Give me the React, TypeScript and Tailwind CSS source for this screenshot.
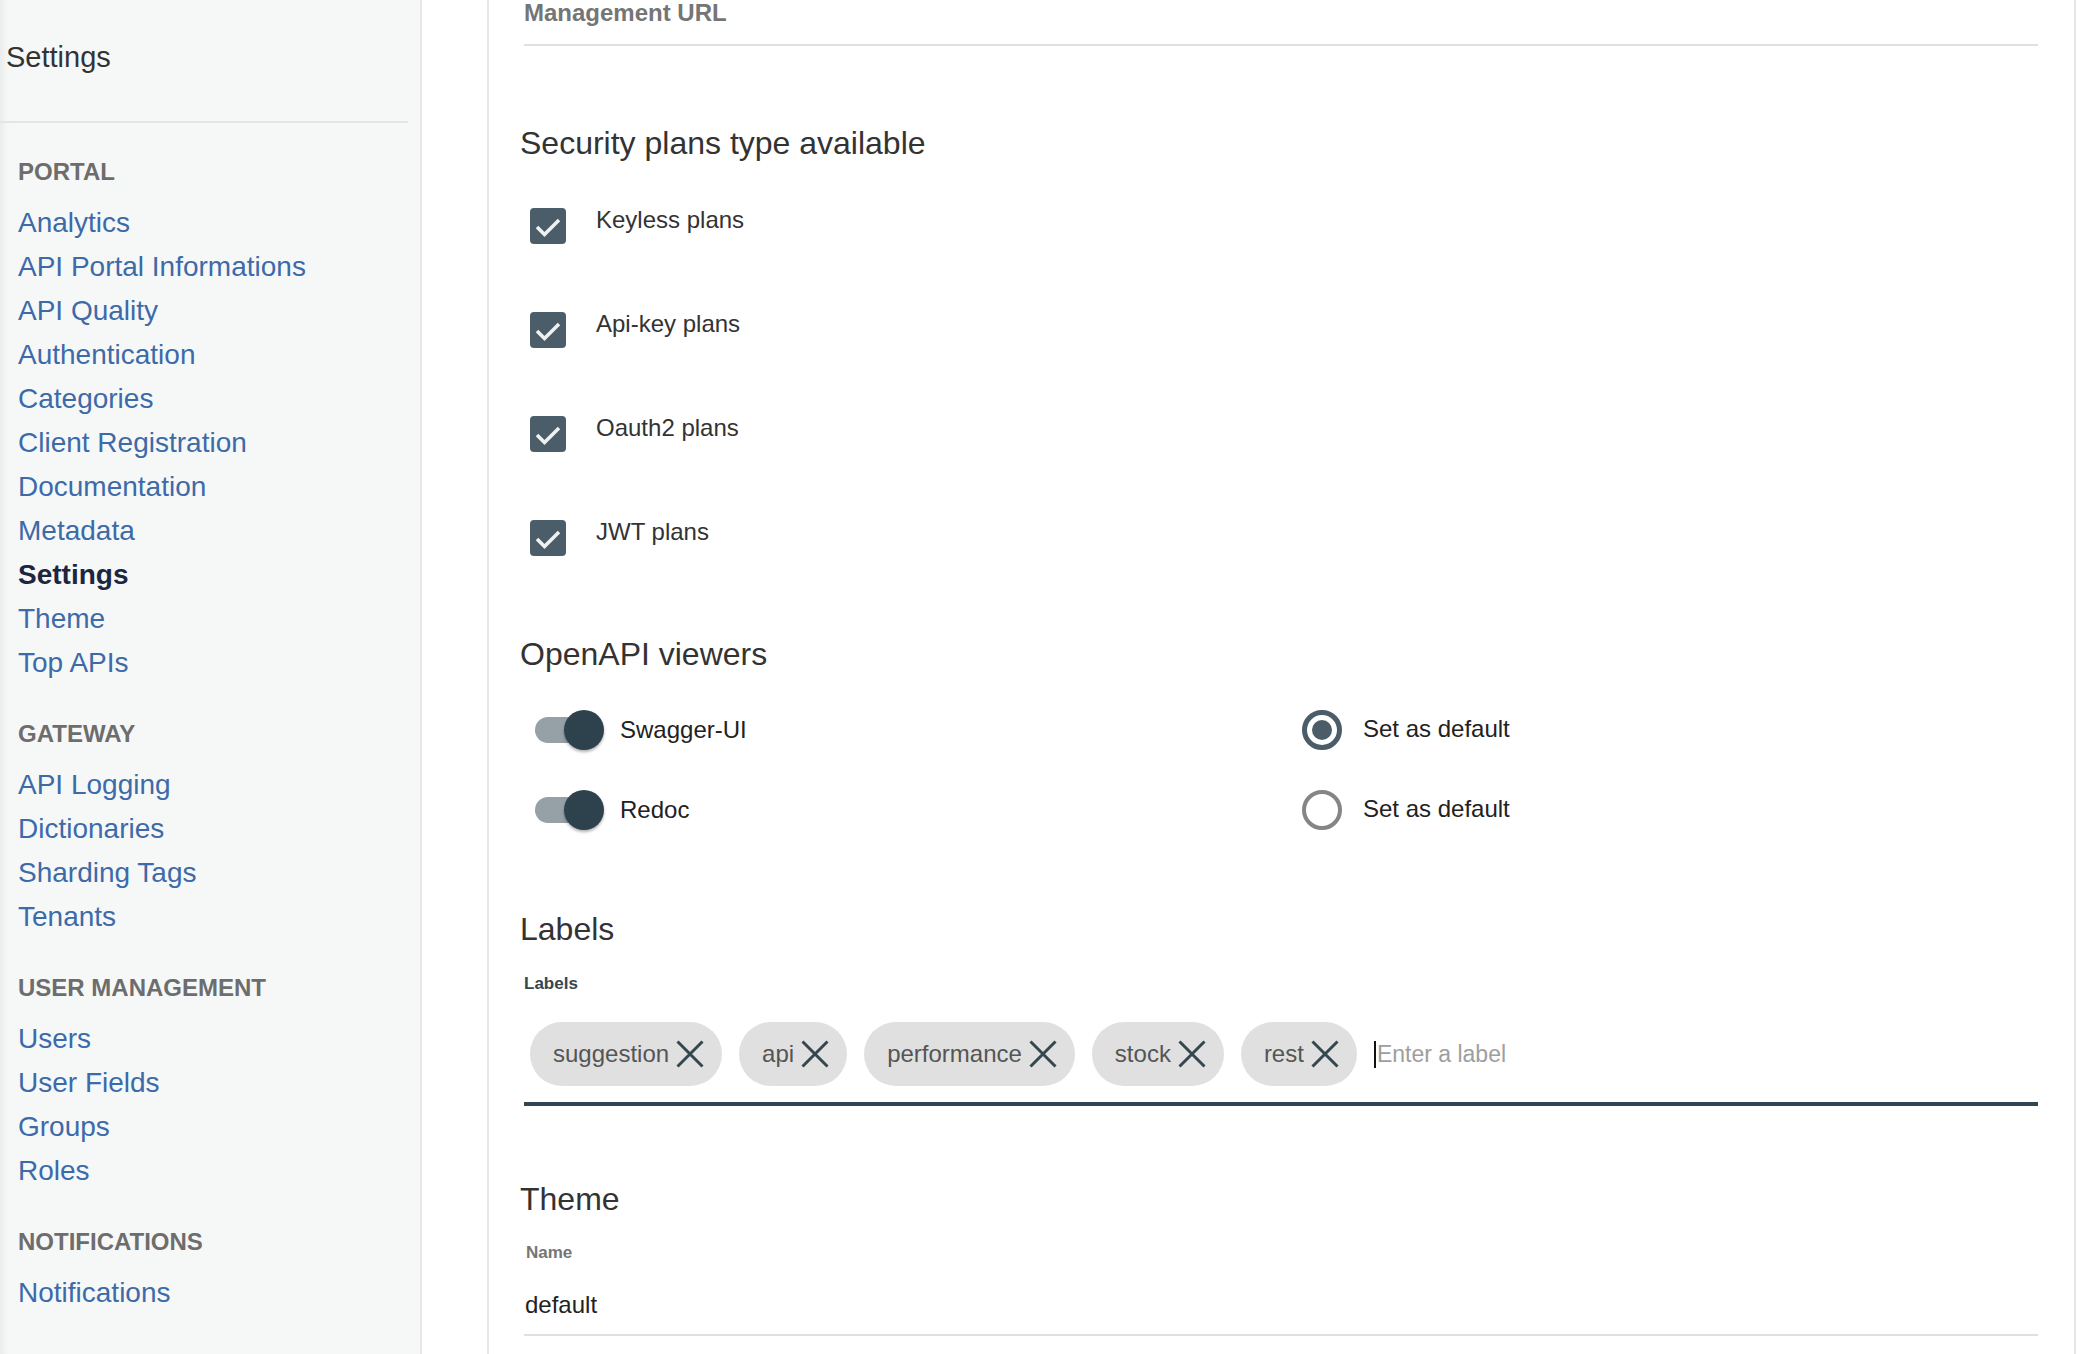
const sections = [
  {
    title: "PORTAL",
    links: [
      "Analytics",
      "API Portal Informations",
      "API Quality",
      "Authentication",
      "Categories",
      "Client Registration",
      "Documentation",
      "Metadata",
      "Settings",
      "Theme",
      "Top APIs",
    ],
  },
  { title: "GATEWAY", links: ["API Logging", "Dictionaries", "Sharding Tags", "Tenants"] },
  { title: "USER MANAGEMENT", links: ["Users", "User Fields", "Groups", "Roles"] },
  { title: "NOTIFICATIONS", links: ["Notifications"] },
];

const plans = ["Keyless plans", "Api-key plans", "Oauth2 plans", "JWT plans"];
const labels = ["suggestion", "api", "performance", "stock", "rest"];

function Checkbox() {
  return (
    <div className="mt-[2px] ml-[6px] w-[36px] h-[36px] rounded-[4px] bg-[#4b5d69] flex items-center justify-center shrink-0">
      <svg width="36" height="36" viewBox="0 0 36 36" fill="none">
        <path d="M7 19 L14.5 26.5 L29 12" stroke="#eef1f3" strokeWidth="3.6" />
      </svg>
    </div>
  );
}

function Toggle() {
  return (
    <div className="relative w-[70px] h-[40px] shrink-0">
      <div className="absolute left-0 top-[7px] w-[64px] h-[26px] rounded-full bg-[#95a1a7]" />
      <div className="absolute left-[29px] top-0 w-[40px] h-[40px] rounded-full bg-[#2e424e] shadow-[0_2px_3px_rgba(0,0,0,0.3)]" />
    </div>
  );
}

function Radio({ checked }: { checked: boolean }) {
  if (checked) {
    return (
      <div className="w-[40px] h-[40px] rounded-full border-[5px] border-[#4b5d69] flex items-center justify-center shrink-0">
        <div className="w-[20px] h-[20px] rounded-full bg-[#4b5d69]" />
      </div>
    );
  }
  return <div className="w-[40px] h-[40px] rounded-full border-[4px] border-[#858585] shrink-0" />;
}

function Chip({ text }: { text: string }) {
  return (
    <div className="h-[64px] rounded-full bg-[#e0e0e0] pl-[23px] pr-[18px] flex items-center gap-[7px]">
      <span className="text-[24px] leading-[28px] text-[#555]">{text}</span>
      <svg width="28" height="28" viewBox="0 0 28 28" fill="none">
        <path d="M1.5 1.5 L26.5 26.5 M26.5 1.5 L1.5 26.5" stroke="#34474f" strokeWidth="3" />
      </svg>
    </div>
  );
}

export default function App() {
  return (
    <div
      className="flex h-[1354px] w-full overflow-hidden bg-white text-[#333]"
      style={{ fontFamily: '"Liberation Sans", Arial, Helvetica, sans-serif' }}
    >
      <aside className="w-[422px] shrink-0 h-full bg-[#f6f8f8] border-r-2 border-[#e6e8e8] shadow-[inset_10px_0_8px_-8px_rgba(0,0,0,0.07)]">
        <div className="pl-[6px] pt-[40px] h-[121px] text-[29px] leading-[34px] text-[#333]">Settings</div>
        <div className="h-[2px] bg-[#e3e5e5] mr-[12px]" />
        {sections.map((s) => (
          <div key={s.title} className="mt-[35px] pl-[18px]">
            <div className="h-[28px] leading-[28px] text-[24px] font-bold text-[#6d6d6d] mb-[15px]">{s.title}</div>
            {s.links.map((l) => (
              <div
                key={l}
                className={
                  l === "Settings"
                    ? "text-[28px] leading-[44px] font-bold text-[#1d2640]"
                    : "text-[28px] leading-[44px] text-[#3d6aa8]"
                }
              >
                {l}
              </div>
            ))}
          </div>
        ))}
      </aside>

      <main className="flex-1 pl-[65px] pr-[20px] h-full">
        <div className="h-full border-x-2 border-[#e6e6e6] pl-[35px] pr-[36px]">
          <div className="h-[26px] leading-[26px] text-[24px] font-bold text-[#757575]">Management URL</div>
          <div className="mt-[18px] h-[2px] bg-[#e0e0e0]" />

          <h2 className="mt-[78px] -ml-[4px] text-[32px] leading-[38px] text-[#333]">Security plans type available</h2>
          <div className="mt-[44px]">
            {plans.map((p) => (
              <div key={p} className="flex items-start h-[104px]">
                <Checkbox />
                <span className="ml-[30px] text-[24px] leading-[28px] text-[#333]">{p}</span>
              </div>
            ))}
          </div>

          <h2 className="mt-[13px] -ml-[4px] text-[32px] leading-[38px] text-[#333]">OpenAPI viewers</h2>
          <div className="mt-[17px]">
            {[
              { name: "Swagger-UI", def: true },
              { name: "Redoc", def: false },
            ].map((v) => (
              <div key={v.name} className="grid grid-cols-2 h-[80px]">
                <div className="flex items-center pl-[11px]">
                  <Toggle />
                  <span className="ml-[15px] text-[24px] leading-[28px] text-[#222]">{v.name}</span>
                </div>
                <div className="flex items-center pl-[21px]">
                  <Radio checked={v.def} />
                  <span className="ml-[21px] -mt-[2px] text-[24px] leading-[28px] text-[#222]">Set as default</span>
                </div>
              </div>
            ))}
          </div>

          <h2 className="mt-[60px] -ml-[4px] text-[32px] leading-[38px] text-[#333]">Labels</h2>
          <div className="mt-[26px] text-[17px] leading-[20px] font-bold text-[#34474f]">Labels</div>
          <div className="mt-[28px] flex items-center gap-[17px] pl-[6px] pb-[16px] border-b-4 border-[#324652]">
            {labels.map((l) => (
              <Chip key={l} text={l} />
            ))}
            <div className="flex items-center">
              <span className="w-[2px] h-[27px] bg-[#111]" />
              <span className="ml-[1px] text-[23px] leading-[28px] text-[#9e9e9e]">Enter a label</span>
            </div>
          </div>

          <h2 className="mt-[74px] -ml-[4px] text-[32px] leading-[38px] text-[#333]">Theme</h2>
          <div className="mt-[25px] pl-[2px] text-[17px] leading-[20px] font-bold text-[#757575]">Name</div>
          <div className="mt-[28px] pl-[1px] text-[24px] leading-[28px] text-[#222]">default</div>
          <div className="mt-[15px] h-[2px] bg-[#e0e0e0]" />
        </div>
      </main>
    </div>
  );
}
